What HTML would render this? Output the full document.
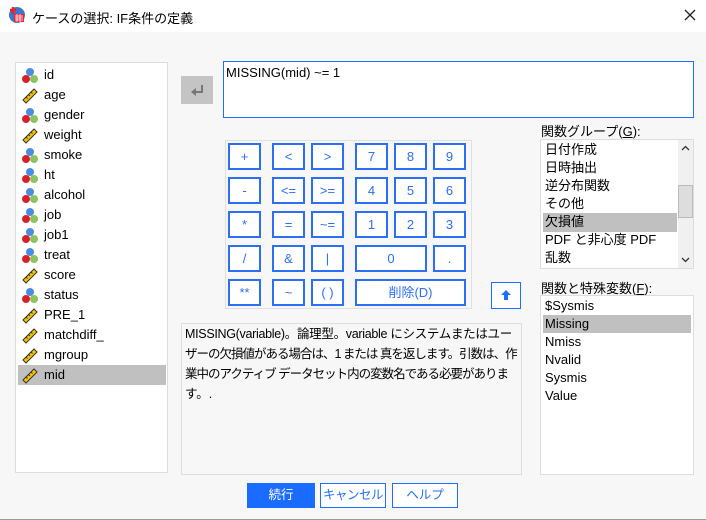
<!DOCTYPE html>
<html><head><meta charset="utf-8"><style>
*{box-sizing:border-box;margin:0;padding:0}
body{width:706px;height:520px;background:#f7f7f7;font-family:"Liberation Sans","Noto Sans CJK JP",sans-serif;font-size:13px;color:#000;position:relative;overflow:hidden;border-bottom:1px solid #999}
.a{position:absolute}
.title{left:0;top:0;width:706px;height:32px;background:#fff}
.list{background:#fff;border:1px solid #ddd}
.it{position:absolute;left:2px;height:20px;line-height:20px;padding-left:26px;width:148px}
.gi{position:absolute;left:2px;height:18px;line-height:18px;padding-left:2px;width:134px;white-space:nowrap}
.sel{background:#c0c0c0}
.ic{position:absolute;left:3px;top:2px}
.b{position:absolute;border:2px solid #2a6ff5;background:#fff;color:#2a6ff5;text-align:center;font-size:13px;line-height:23px;height:27px}
.fi{position:absolute;left:2px;height:18px;line-height:18px;padding-left:2px;width:148px;font-size:13px}
.btn{position:absolute;top:483px;height:25px;text-align:center;white-space:nowrap;font-size:12.5px}
.dl{display:block;white-space:nowrap}
</style></head><body>
<div class="a title"></div>
<svg class="a" style="left:8px;top:6px" width="18" height="18" viewBox="0 0 18 18"><circle cx="9" cy="9" r="8" fill="#3a78c8"/><rect x="6" y="8" width="10" height="8" fill="#e23" /><path d="M7 10h8M7 12h8M7 14h8M9 8v8M12 8v8" stroke="#fff" stroke-width="0.8"/><path d="M2 4h6M5 1v7" stroke="#e22" stroke-width="2.4"/></svg>
<div class="a" style="left:32px;top:8px;font-size:13px">ケースの選択: IF条件の定義</div>
<svg class="a" style="left:684px;top:9px" width="12" height="12" viewBox="0 0 12 12"><path d="M1 1L11 11M11 1L1 11" stroke="#222" stroke-width="1.3"/></svg>

<div class="a list" style="left:15px;top:62px;width:153px;height:411px">
<div id="vl"></div>
</div>

<div class="a" style="left:181px;top:76px;width:32px;height:28px;background:#c4c4c4"></div>
<svg class="a" style="left:189px;top:82px" width="16" height="16" viewBox="0 0 16 16"><path d="M12 3v6H7V6L2 10l5 4v-3h7V3z" fill="#777"/></svg>

<div class="a" style="left:223px;top:61px;width:471px;height:57px;background:#fff;border:1px solid #1e6fff;padding:3px 2px">MISSING(mid) ~= 1</div>

<div class="a" style="left:225px;top:140px;width:247px;height:169px;border:1px solid #e0e0e0"></div>
<div id="kp"></div>

<div class="a" style="left:541px;top:121px">関数グループ(<u>G</u>):</div>
<div class="a list" style="left:540px;top:139px;width:154px;height:130px;overflow:hidden">
<div class="gi" style="top:1px">日付作成</div>
<div class="gi" style="top:19px">日時抽出</div>
<div class="gi" style="top:37px">逆分布関数</div>
<div class="gi" style="top:55px">その他</div>
<div class="gi sel" style="top:73px;height:19px">欠損値</div>
<div class="gi" style="top:91px">PDF と非心度 PDF</div>
<div class="gi" style="top:109px">乱数</div>
<div class="a" style="left:137px;top:0;width:15px;height:128px;background:#f0f0f0"></div>
<div class="a" style="left:137px;top:45px;width:15px;height:33px;background:#ddd;border:1px solid #bbb"></div>
<svg class="a" style="left:140px;top:5px" width="9" height="6" viewBox="0 0 9 6"><path d="M1 5L4.5 1.5L8 5" stroke="#333" fill="none" stroke-width="1.3"/></svg>
<svg class="a" style="left:140px;top:117px" width="9" height="6" viewBox="0 0 9 6"><path d="M1 1L4.5 4.5L8 1" stroke="#333" fill="none" stroke-width="1.3"/></svg>
</div>

<div class="a" style="left:491px;top:282px;width:30px;height:27px;border:1px solid #1e6fff;background:#fff"></div>
<svg class="a" style="left:499px;top:288px" width="14" height="14" viewBox="0 0 14 14"><path d="M7 2L2 7h3v5h4V7h3z" fill="#1e6fff"/></svg>

<div class="a" style="left:541px;top:278px">関数と特殊変数(<u>F</u>):</div>
<div class="a list" style="left:540px;top:295px;width:154px;height:180px">
<div class="fi" style="top:1px">$Sysmis</div>
<div class="fi sel" style="top:19px">Missing</div>
<div class="fi" style="top:37px">Nmiss</div>
<div class="fi" style="top:55px">Nvalid</div>
<div class="fi" style="top:73px">Sysmis</div>
<div class="fi" style="top:91px">Value</div>
</div>

<div class="a" style="left:181px;top:323px;width:341px;height:152px;border:1px solid #ddd;padding:0 3px;line-height:20px;font-size:12.5px;overflow:hidden">
<span class="dl" style="letter-spacing:-0.3px">MISSING(variable)。論理型。variable にシステムまたはユー</span>
<span class="dl" style="letter-spacing:-1px">ザーの欠損値がある場合は、1 または 真を返します。引数は、作</span>
<span class="dl" style="letter-spacing:-1px">業中のアクティブ データセット内の変数名である必要がありま</span>
<span class="dl">す。.</span></div>

<div class="btn" style="left:247px;width:68px;background:#1a6bff;color:#fff;line-height:25px">続行</div>
<div class="btn" style="left:320px;width:66px;border:1px solid #1e6fff;background:#fff;color:#1e6fff;line-height:23px;letter-spacing:-0.5px">キャンセル</div>
<div class="btn" style="left:392px;width:66px;border:1px solid #1e6fff;background:#fff;color:#1e6fff;line-height:23px">ヘルプ</div>

<script>
var nom='<svg class="ic" width="18" height="17" viewBox="0 0 18 17"><circle cx="9" cy="5" r="4" fill="#4a8de0"/><circle cx="5" cy="12" r="4" fill="#d8202c"/><circle cx="13" cy="12" r="4" fill="#8cc460"/></svg>';
var sc='<svg class="ic" width="18" height="17" viewBox="0 0 18 17"><path d="M2 13L13 2l3 3L5 16z" fill="#f5c400" stroke="#333" stroke-width="1"/><path d="M5 10l1.5 1.5M7.5 7.5l1.5 1.5M10 5l1.5 1.5" stroke="#333"/></svg>';
var v=[['id',0],['age',1],['gender',0],['weight',1],['smoke',0],['ht',0],['alcohol',0],['job',0],['job1',0],['treat',0],['score',1],['status',0],['PRE_1',1],['matchdiff_',1],['mgroup',1],['mid',1]];
var h='';v.forEach(function(x,i){h+='<div class="it'+(i==15?' sel':'')+'" style="top:'+(2+i*20)+'px">'+(x[1]?sc:nom)+x[0]+'</div>';});
document.getElementById('vl').innerHTML=h;
var cx=[228,272,311,355,394,433],ry=[143,177,211,245,279];
var K=[['+','<','>','7','8','9'],['-','<=','>=','4','5','6'],['*','=','~=','1','2','3'],['/','&','|','0',null,'.'],['**','~','( )','削除(D)',null,null]];
var k='';K.forEach(function(r,ri){r.forEach(function(t,ci){if(t===null)return;var w=33;if(t=='0')w=72;if(t=='削除(D)')w=111;
k+='<div class="b" style="left:'+cx[ci]+'px;top:'+ry[ri]+'px;width:'+w+'px">'+t+'</div>';});});
document.getElementById('kp').innerHTML=k;
</script>
</body></html>
